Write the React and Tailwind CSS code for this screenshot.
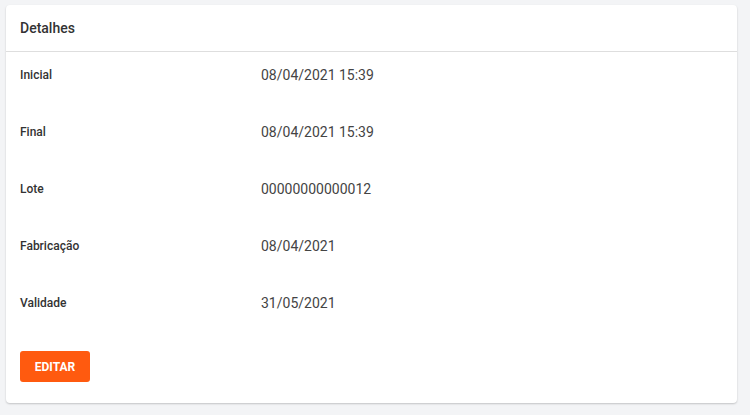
import React from 'react';

const rows = [
  { label: 'Inicial', value: '08/04/2021 15:39' },
  { label: 'Final', value: '08/04/2021 15:39' },
  { label: 'Lote', value: '00000000000012' },
  { label: 'Fabricação', value: '08/04/2021' },
  { label: 'Validade', value: '31/05/2021' },
];

export default function App() {
  return (
    <div className="min-h-[415px] w-[750px] bg-[#f3f4f6] pt-[5px] pl-[6px] font-['Roboto',sans-serif]">
      <div className="w-[731px] rounded-[4px] bg-white shadow-[0_1px_2px_rgba(0,0,0,0.2)]">
        <div className="flex h-[47px] items-center border-b border-[#dedede] px-[14px]">
          <h2 className="text-[14px] font-medium text-[#333]">Detalhes</h2>
        </div>
        <div className="px-[14px]">
          {rows.map((r) => (
            <div key={r.label} className="flex h-[57px] items-start pt-[14px]">
              <div className="w-[241px] text-[12px] leading-[18px] font-medium text-[#333]">{r.label}</div>
              <div className="text-[14px] leading-[18px] text-[#444]">{r.value}</div>
            </div>
          ))}
        </div>
        <div className="px-[14px] pt-[14px] pb-[21px]">
          <button className="h-[31px] w-[70px] rounded-[3px] bg-[#ff5a0f] text-[12px] font-bold text-white">
            EDITAR
          </button>
        </div>
      </div>
    </div>
  );
}
